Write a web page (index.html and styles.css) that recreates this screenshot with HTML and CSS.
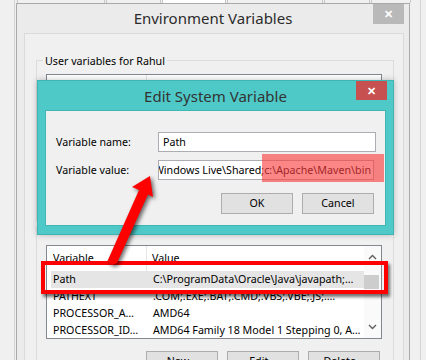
FILE: index.html
```html
<!DOCTYPE html>
<html lang="en">
<head>
  <meta charset="UTF-8">
  <title>Edit System Variable</title>
  <link rel="stylesheet" href="styles.css">
</head>
<body>
  <div class="screen">
    <!-- System Properties window underneath -->
    <div class="under">
      <div class="tabs">
        <span class="tab t1"></span>
        <span class="tab t2"></span>
        <span class="tab t3 active"></span>
        <span class="tab t4"></span>
        <span class="tab t5"></span>
        <span class="tab t6"></span>
      </div>

      <!-- Environment Variables dialog -->
      <div class="env">
        <div class="titlebar">
          <span></span>
          <span class="title">Environment Variables</span>
          <span class="close close-gray">&#x2715;</span>
        </div>
        <div class="panel">
          <div class="group user-group">
            <div class="legend">User variables for Rahul</div>
            <div class="listbox user-list">
              <div class="list-main">
                <div class="list-head">
                  <span class="col-var">Variable</span>
                  <span class="col-val">Value</span>
                </div>
              </div>
            </div>
            <div class="btn-row">
              <span class="btn">New...</span>
              <span class="btn">Edit...</span>
              <span class="btn">Delete...</span>
            </div>
          </div>

          <div class="group sys-group">
            <div class="legend">System variables</div>
            <div class="listbox sys-list">
              <div class="list-main">
                <div class="list-head">
                  <span class="col-var">Variable</span>
                  <span class="col-val">Value</span>
                </div>
                <div class="list-row selected">
                  <span class="col-var">Path</span>
                  <span class="col-val">C:\ProgramData\Oracle\Java\javapath;…</span>
                </div>
                <div class="list-row">
                  <span class="col-var">PATHEXT</span>
                  <span class="col-val">.COM;.EXE;.BAT;.CMD;.VBS;.VBE;.JS;.…</span>
                </div>
                <div class="list-row">
                  <span class="col-var">PROCESSOR_A…</span>
                  <span class="col-val">AMD64</span>
                </div>
                <div class="list-row">
                  <span class="col-var">PROCESSOR_ID…</span>
                  <span class="col-val">AMD64 Family 18 Model 1 Stepping 0, A…</span>
                </div>
              </div>
              <div class="scrollbar">
                <svg class="chev" width="9" height="6" viewBox="0 0 9 6"><path d="M1 5 L4.5 1.5 L8 5"/></svg>
                <div class="track"><div class="thumb"></div></div>
                <svg class="chev" width="9" height="6" viewBox="0 0 9 6"><path d="M1 1 L4.5 4.5 L8 1"/></svg>
              </div>
            </div>
            <div class="btn-row sys-buttons">
              <span class="btn">New...</span>
              <span class="btn">Edit...</span>
              <span class="btn">Delete...</span>
            </div>
          </div>
        </div>
      </div>
    </div>

    <!-- Edit System Variable dialog on top -->
    <div class="edit">
      <div class="titlebar edit-titlebar">
        <span></span>
        <span class="title">Edit System Variable</span>
        <span class="close close-red">&#x2715;</span>
      </div>
      <div class="edit-panel">
        <div class="field">
          <label class="field-label">Variable name:</label>
          <div class="input"><span>Path</span></div>
        </div>
        <div class="field">
          <label class="field-label">Variable value:</label>
          <div class="input input-end"><span>Windows Live\Shared;c:\Apache\Maven\bin</span></div>
        </div>
        <div class="edit-buttons">
          <span class="btn">OK</span>
          <span class="btn">Cancel</span>
        </div>
      </div>
    </div>

    <!-- annotations -->
    <div class="mark-value"></div>
    <div class="mark-row"></div>
    <svg class="arrow" width="426" height="360" viewBox="0 0 426 360">
      <polygon points="150,176 153,197 148,194.5 117,263 112,265 107.5,261 139,190 132,187"/>
    </svg>
  </div>
</body>
</html>
```

FILE: styles.css
```css
html, body {
  margin: 0;
  padding: 0;
}
body {
  width: 426px;
  height: 360px;
  overflow: hidden;
  background: #f0f0f0;
  font-family: "Noto Sans", "Open Sans", sans-serif;
  font-size: 10.7px;
  color: #000;
}
.screen {
  position: relative;
  width: 426px;
  height: 360px;
  overflow: hidden;
}

/* window underneath */
.under {
  margin-left: 14px;
  width: 396px;
  height: 360px;
  padding: 0 8px 0 1px;
  border-left: 1px solid #d6d6d6;
  border-right: 1px solid #d6d6d6;
  background: #f0f0f0;
}
.tabs {
  display: flex;
  height: 3px;
  padding-left: 1px;
}
.tab {
  height: 3px;
  border: 1px solid #c8c8c8;
  border-top: 0;
  border-bottom: 0;
  background: #f0f0f0;
  margin-right: 1px;
}
.t1 { width: 86px; }
.t2 { width: 53px; }
.t3 { width: 62px; }
.t4 { width: 94px; }
.t5 { width: 44px; }
.t6 { width: 38px; }
.tab.active { background: #fff; }

/* Environment Variables dialog */
.env {
  width: 392px;
  height: 400px;
  border: 1px solid #a9a9a9;
  background: #ebebeb;
}
.titlebar {
  display: grid;
  grid-template-columns: 1fr auto 1fr;
  align-items: start;
  height: 29px;
}
.title {
  font-size: 15px;
  line-height: 29px;
  color: #2b2b2b;
}
.close {
  justify-self: end;
  width: 31px;
  height: 20px;
  margin-right: 5px;
  color: #fff;
  font-size: 11px;
  font-weight: bold;
  line-height: 20px;
  text-align: center;
}
.close-gray { background: #b9b9b9; }
.close-red { background: #c75050; height: 19px; line-height: 19px; margin-right: 6px; }

.panel {
  margin: 0 5px 0 7px;
  height: 400px;
  border: 1px solid #dadada;
  background: #f0f0f0;
}
.group {
  margin: 26px 9px 0 11px;
  padding: 0 11px 8px 9px;
  border: 1px solid #dcdcdc;
}
.sys-group { margin-top: 6px; }
.legend {
  width: fit-content;
  margin: -8px 0 0 -3px;
  padding: 0 2px;
  line-height: 16px;
  background: #f0f0f0;
}
.listbox {
  display: flex;
  margin-top: 5px;
  border: 1px solid #828790;
  background: #fff;
  overflow: hidden;
}
.user-list { height: 102px; }
.sys-list { height: 92px; margin-top: 9px; }
.list-main {
  flex: 1;
  min-width: 0;
}
.list-head, .list-row {
  display: flex;
  white-space: nowrap;
}
.list-head {
  height: 25px;
  line-height: 24px;
}
.list-row {
  height: 17px;
  line-height: 17px;
}
.list-row.selected {
  background: #e5e5e5;
  margin-left: 4px;
}
.list-row.selected .col-var { width: 96px; padding-left: 2px; }
.col-var {
  width: 100px;
  padding-left: 6px;
  box-sizing: border-box;
  overflow: hidden;
}
.list-head .col-var { border-right: 1px solid #e5e5e5; }
.col-val {
  flex: 1;
  padding-left: 5px;
  overflow: hidden;
}
.list-row .col-val { padding-left: 6px; }
.scrollbar {
  width: 17px;
  display: flex;
  flex-direction: column;
  align-items: center;
  background: #fafafa;
}
.chev {
  fill: none;
  stroke: #606060;
  stroke-width: 1.4;
  margin: 8px 0;
}
.track {
  flex: 1;
  width: 17px;
}
.thumb {
  margin-top: 7px;
  width: 15px;
  height: 14px;
  background: #cdcdcd;
}
.btn-row {
  display: flex;
  justify-content: flex-end;
  gap: 9px;
  margin-top: 13px;
  padding-right: 2px;
}
.sys-buttons { margin-top: 12px; }
.btn {
  width: 70px;
  height: 19px;
  line-height: 19px;
  text-align: center;
  border: 1px solid #adadad;
  background: #e1e1e1;
}

/* Edit System Variable dialog */
.edit {
  position: absolute;
  left: 37px;
  top: 80px;
  width: 355px;
  height: 153px;
  border: 1px solid #3fb4b2;
  background: #4ec9c8;
  box-shadow: 0 0 6px rgba(0, 0, 0, 0.25);
}
.edit-titlebar .title {
  color: #333;
  line-height: 30px;
}
.edit-panel {
  margin: 0 7px;
  height: 93px;
  padding: 21px 9px 0 10px;
  border: 1px solid #41b7b5;
  background: #f0f0f0;
}
.field {
  display: flex;
  align-items: center;
  margin-bottom: 8px;
}
.field-label {
  width: 102px;
}
.input {
  display: flex;
  width: 208px;
  height: 18px;
  line-height: 18px;
  padding: 0 4px;
  border: 1px solid #abadb3;
  background: #fff;
  white-space: nowrap;
  overflow: hidden;
}
.input span { flex-shrink: 0; }
.input-end { justify-content: flex-end; padding-right: 2px; }
.edit-buttons {
  display: flex;
  justify-content: flex-end;
  gap: 9px;
  margin-top: 13px;
  padding-right: 2px;
}

/* annotations */
.mark-value {
  position: absolute;
  left: 262px;
  top: 154px;
  width: 122px;
  height: 28px;
  background: rgba(250, 60, 60, 0.62);
}
.mark-row {
  position: absolute;
  left: 41px;
  top: 261px;
  width: 339px;
  height: 25px;
  border: 4px solid #f00;
  box-shadow: 2px 3px 3px rgba(0, 0, 0, 0.55);
}
.arrow {
  position: absolute;
  left: 0;
  top: 0;
  fill: #f00;
  filter: drop-shadow(2px 2px 2px rgba(0, 0, 0, 0.6));
}
```
